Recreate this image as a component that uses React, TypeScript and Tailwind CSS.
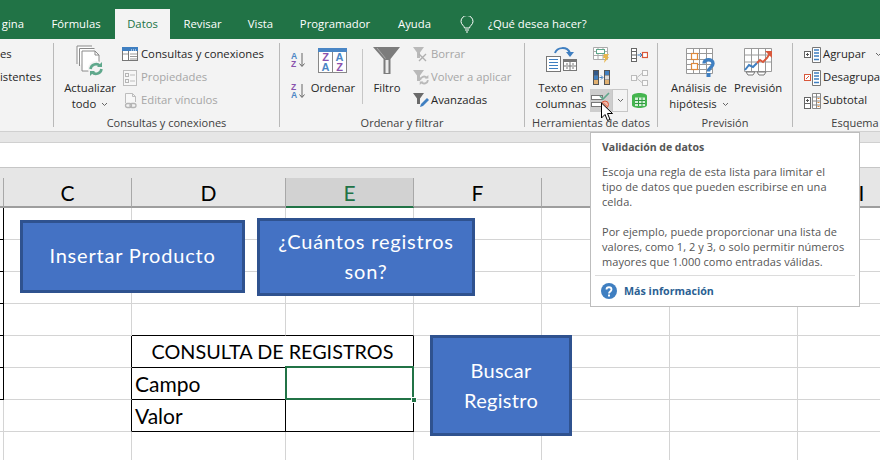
import type { ReactNode } from 'react';
import clsx from 'clsx';

const ui = 'font-["Open_Sans",sans-serif]';
const sheetFont = 'font-["Lato",sans-serif]';

const tabs = [
  { label: 'gina', w: 'w-[37px] text-right pr-[13px]' },
  { label: 'Fórmulas', w: 'w-[78px] text-center' },
  { label: 'Datos', w: 'w-[55px] text-center', active: true },
  { label: 'Revisar', w: 'w-[65px] text-center' },
  { label: 'Vista', w: 'w-[51px] text-center' },
  { label: 'Programador', w: 'w-[98px] text-center' },
  { label: 'Ayuda', w: 'w-[61px] text-center' },
];

function Chevron({ className = '' }: { className?: string }) {
  return (
    <svg width="7" height="5" viewBox="0 0 7 5" className={className}>
      <path d="M1 1l2.5 2.5L6 1" fill="none" stroke="#666" strokeWidth="1" />
    </svg>
  );
}

function Arrows({ x, y, s = 1, color = '#5fa88c' }: { x: number; y: number; s?: number; color?: string }) {
  return (
    <g transform={`translate(${x} ${y}) scale(${s})`} fill="none" stroke={color} strokeWidth="2.6">
      <path d="M1.5 7a5.5 5.5 0 0 1 9.5-3" />
      <path d="M12.5 7a5.5 5.5 0 0 1-9.5 3" />
      <path d="M8 5h5V0z" fill={color} stroke="none" />
      <path d="M6 9H1v5z" fill={color} stroke="none" />
    </g>
  );
}

function IconActualizar() {
  return (
    <svg width="36" height="34" viewBox="0 0 36 34">
      <path d="M5 20V2h15M7.5 22V4.500h15M10 24V7h13l4 4v16H10z" fill="#fff" stroke="#8a8a8a" strokeWidth="1" />
      <path d="M23 7v4h4" fill="none" stroke="#8a8a8a" />
      <circle cx="24" cy="25" r="8" fill="#f3f3f3" />
      <Arrows x={17} y={18} />
    </svg>
  );
}

function IconConsultas() {
  return (
    <svg width="17" height="15" viewBox="0 0 17 15">
      <rect x=".5" y=".5" width="15" height="13" fill="#fff" stroke="#777" />
      <rect x="0" y="0" width="16" height="4" fill="#3f7fc1" />
      <path d="M9 3h1M11 3h1M13 3h1" stroke="#fff" />
      <path d="M1 7h5M8 7h7M8 9.500h7M8 12h7" stroke="#999" />
      <path d="M6.500 4v10" stroke="#777" />
    </svg>
  );
}

function IconPropiedades() {
  return (
    <svg width="16" height="16" viewBox="0 0 16 16">
      <rect x="1.500" y=".5" width="13" height="15" fill="#f7f7f7" stroke="#bdbdbd" />
      <rect x="3.500" y="3.500" width="3" height="3" fill="none" stroke="#b5b5b5" />
      <rect x="3.500" y="9.500" width="3" height="3" fill="none" stroke="#b5b5b5" />
      <path d="M8 5h5M8 11h5" stroke="#bdbdbd" />
    </svg>
  );
}

function IconVinculos() {
  return (
    <svg width="16" height="16" viewBox="0 0 16 16">
      <path d="M3.500 10V.5h7l3 3V9M10.500.5v3h3" fill="#f7f7f7" stroke="#bdbdbd" />
      <rect x="3.500" y="10.500" width="6" height="4" rx="2" fill="none" stroke="#b5b5b5" strokeWidth="1.300" />
      <rect x="8" y="10.500" width="6" height="4" rx="2" fill="none" stroke="#b5b5b5" strokeWidth="1.300" />
    </svg>
  );
}

function IconSort({ first, second }: { first: string; second: string }) {
  const top = first === 'A' ? '#4a86c5' : '#8a52ad';
  const low = second === 'A' ? '#4a86c5' : '#8a52ad';
  return (
    <svg width="15" height="16" viewBox="0 0 15 16">
      <text x="0" y="7" fontSize="8.500" fontWeight="700" fontFamily="Liberation Sans" fill={top}>{first}</text>
      <text x="0" y="15" fontSize="8.500" fontWeight="700" fontFamily="Liberation Sans" fill={low}>{second}</text>
      <path d="M11 1v13M8.500 11.500L11 14.500l2.500-3" fill="none" stroke="#666" />
    </svg>
  );
}

function IconOrdenar() {
  return (
    <svg width="36" height="34" viewBox="0 0 36 34">
      <rect x="3.500" y="4.500" width="28" height="24" fill="#fff" stroke="#888" />
      <rect x="3" y="4" width="29" height="4" fill="#4a86c5" />
      <path d="M17.500 8v20" stroke="#888" />
      <g fontSize="11" fontWeight="700" fontFamily="Liberation Sans" textAnchor="middle">
        <text x="10.500" y="17" fill="#8a52ad">Z</text>
        <text x="10.500" y="27" fill="#4a86c5">A</text>
        <text x="24.500" y="17" fill="#4a86c5">A</text>
        <text x="24.500" y="27" fill="#8a52ad">Z</text>
      </g>
    </svg>
  );
}

function IconFiltro() {
  return (
    <svg width="36" height="34" viewBox="0 0 36 34">
      <path d="M4 3h27L21.500 15v15h-7V15z" fill="#7c7c7c" />
      <path d="M16.500 16h3v13h-3z" fill="#ececec" />
      <path d="M8 4l8.500 10.500" stroke="#a8a8a8" fill="none" />
    </svg>
  );
}

function SmallFunnel({ mark }: { mark: 'x' | 'redo' | 'pen' }) {
  const c = mark === 'pen' ? '#6a6a6a' : '#b9b9b9';
  return (
    <svg width="18" height="17" viewBox="0 0 18 17">
      <path d="M1 1h11L8 6.500V12H5V6.500z" fill={c} />
      {mark === 'x' && <path d="M7 8l7 7M14 8l-7 7" stroke="#b0b0b0" strokeWidth="1.400" />}
      {mark === 'redo' && <Arrows x={7} y={6} s={0.72} color="#b9b9b9" />}
      {mark === 'pen' && <path d="M8 15l1-3 6-6 2 2-6 6z" fill="#3f7fc1" />}
    </svg>
  );
}

function IconTexto() {
  return (
    <svg width="36" height="34" viewBox="0 0 36 34">
      <rect x="3.500" y="12.500" width="14" height="15" fill="#fff" stroke="#777" />
      <path d="M6 15.500h9M6 18.500h9M6 21.500h9M6 24.500h9" stroke="#3f7fc1" />
      <rect x="20.500" y="15.500" width="13" height="11" fill="#fff" stroke="#777" />
      <rect x="20" y="15" width="14" height="3" fill="#777" />
      <path d="M21 22h12M27 18v8M23 20h2M29 20h2M23 24h2M29 24h2" stroke="#777" />
      <path d="M12 9c2-6 12-7 15 0" fill="none" stroke="#3f7fc1" strokeWidth="2" />
      <path d="M23 8h8l-4 5z" fill="#3f7fc1" />
    </svg>
  );
}

function IconFlash() {
  return (
    <svg width="17" height="17" viewBox="0 0 17 17">
      <path d="M.5 1.500h14v12H.5zM.5 5.500h14M.5 9.500h14M5 1.500v12M10 1.500v12" fill="#fff" stroke="#aaa" />
      <rect x="3.500" y="3.500" width="8" height="4" fill="#fff" stroke="#5fa88c" />
      <path d="M11 8h5l-2 3h2l-5 6 1-5h-2z" fill="#e8b64c" />
    </svg>
  );
}

function IconDuplicados() {
  return (
    <svg width="17" height="15" viewBox="0 0 17 15">
      <rect x=".5" y=".5" width="5" height="14" fill="#666" stroke="#555" />
      <rect x="1" y="1" width="4" height="4" fill="#345a8a" />
      <rect x="1" y="5.500" width="4" height="4" fill="#3f7fc1" />
      <rect x="1" y="10" width="4" height="4" fill="#e0b070" />
      <rect x="11.500" y=".5" width="5" height="14" fill="#666" stroke="#555" />
      <rect x="12" y="1" width="4" height="4" fill="#3f7fc1" />
      <rect x="12" y="5.500" width="4" height="4" fill="#dcdcdc" />
      <rect x="12" y="10" width="4" height="4" fill="#e0b070" />
      <path d="M6.500 7.500h3M8 5.500l2 2-2 2" fill="none" stroke="#3f7fc1" />
    </svg>
  );
}

function IconValidacion() {
  return (
    <svg width="20" height="18" viewBox="0 0 20 18">
      <rect x=".5" y="3.500" width="11" height="4" fill="#fff" stroke="#777" />
      <rect x=".5" y="10.500" width="11" height="4" fill="#fff" stroke="#777" />
      <path d="M9 4l3 3 6-6" fill="none" stroke="#5fa88c" strokeWidth="1.600" />
      <circle cx="14" cy="12.500" r="3.500" fill="#f0b9a8" stroke="#d9583b" />
      <path d="M12 10.500l4 4" stroke="#d9583b" />
    </svg>
  );
}

function IconConsolidar() {
  return (
    <svg width="17" height="14" viewBox="0 0 17 14">
      <rect x=".5" y=".5" width="5" height="13" fill="#fff" stroke="#666" />
      <path d="M1 3.500h4M1 7h4M1 10.500h4" stroke="#666" />
      <path d="M6.500 7h4M9 5l2 2-2 2" fill="none" stroke="#3f7fc1" />
      <rect x="11.500" y="4.500" width="5" height="5" fill="#fff" stroke="#d9583b" strokeWidth="1.200" />
    </svg>
  );
}

function IconRelaciones() {
  return (
    <svg width="17" height="16" viewBox="0 0 17 16">
      <g fill="#fafafa" stroke="#bcbcbc">
        <rect x=".5" y="5.500" width="5" height="5" />
        <rect x="11.500" y=".5" width="5" height="5" />
        <rect x="11.500" y="10.500" width="5" height="5" />
      </g>
      <path d="M5.500 8l6-5M5.500 8l6 5" stroke="#bcbcbc" />
    </svg>
  );
}

function IconModelo() {
  return (
    <svg width="17" height="17" viewBox="0 0 17 17">
      <path d="M1 4c0-4 15-4 15 0v9c0 4-15 4-15 0z" fill="#45b54f" />
      <path d="M4 5.500h10V14H4z" fill="#d5f0d8" />
      <path d="M4 8.500h10M4 11.500h10M7.500 5.500V14M11 5.500V14" stroke="#2f9a3f" />
    </svg>
  );
}

function IconHipotesis() {
  return (
    <svg width="36" height="34" viewBox="0 0 36 34">
      <path d="M5.500 4.500h26v25h-26zM5.500 9.500h26M5.500 15.500h26M5.500 20.500h26M5.500 25.500h26M12.500 4.500v25M18.500 4.500v25M25.500 4.500v25" fill="#fff" stroke="#999" />
      <rect x="10.500" y="9.500" width="6" height="6" fill="#fff" stroke="#e08a3c" strokeWidth="1.200" />
      <rect x="10.500" y="19.500" width="6" height="6" fill="#fff" stroke="#e08a3c" strokeWidth="1.200" />
      <path d="M23 19.500c0-5 9-5 9 0 0 4-4.500 3.500-4.500 8" fill="none" stroke="#3f7fc1" strokeWidth="3.400" />
      <rect x="25.500" y="29" width="4" height="4" fill="#3f7fc1" />
    </svg>
  );
}

function IconPrevision() {
  return (
    <svg width="36" height="34" viewBox="0 0 36 34">
      <path d="M4.500 4.500h27v23h-27zM4.500 11h27M4.500 18h27M11.500 4.500v23M18.500 4.500v23M25.500 4.500v23" fill="#fff" stroke="#999" />
      <path d="M5 26l4-5 4 2 4-4" fill="none" stroke="#3f7fc1" strokeWidth="2" />
      <path d="M17 19l3-3 3 2 4-4 3-5" fill="none" stroke="#d9583b" strokeWidth="2" />
      <path d="M25 7h7v7z" fill="#d9583b" />
      <path d="M6 28h9l-2 3H8zM17 28h9l-2 3h-5z" fill="#fff" stroke="#777" />
    </svg>
  );
}

function IconEsquema({ kind }: { kind: 'agrupar' | 'desagrupar' | 'subtotal' }) {
  const box = kind === 'desagrupar' ? '#d9583b' : '#666';
  return (
    <svg width="17" height="16" viewBox="0 0 17 16">
      <rect x=".5" y="4.500" width="6" height="6" fill="#fff" stroke={box} />
      {kind === 'desagrupar' ? (
        <path d="M2 9l3-3" stroke={box} />
      ) : (
        <path d="M2 7.500h3M3.500 6v3" stroke="#555" />
      )}
      {kind === 'subtotal' ? (
        <>
          <rect x=".5" y="10.500" width="6" height="5" fill="#fff" stroke="#666" />
          <path d="M8.500.5h8v15h-8zM8.500 4h8M8.500 8h8M8.500 12h8M12.500.5v15" fill="#fff" stroke="#888" />
          <path d="M13.500 5.500h2M13.500 9.500h2M13.500 13.500h2" stroke="#e08a3c" />
        </>
      ) : (
        <>
          <path d="M8.500.5h8v15h-8z" fill="#fff" stroke="#777" />
          <path d="M10 3h5M10 6h5M10 9h5M10 12.500h5" stroke="#3f7fc1" strokeWidth="1.300" />
        </>
      )}
    </svg>
  );
}

function Small({ icon, label, disabled }: { icon: ReactNode; label: string; disabled?: boolean }) {
  return (
    <div className="flex h-[23px] items-center whitespace-nowrap">
      <div className="flex w-[19px] shrink-0 items-center">{icon}</div>
      <span className={clsx('pb-px', disabled ? 'text-[#a6a6a6]' : 'text-[#262626]')}>{label}</span>
    </div>
  );
}

function Big({ icon, lines, w, className, chevron }: { icon: ReactNode; lines: string[]; w: string; className?: string; chevron?: boolean }) {
  return (
    <div className={clsx('flex shrink-0 flex-col items-center whitespace-nowrap text-[#262626]', w, className)}>
      <div className="flex h-[37px] justify-center pt-px">{icon}</div>
      {lines.map((l, i) => (
        <div key={l} className="h-4 leading-4">
          {l}
          {chevron && i === lines.length - 1 && <Chevron className="ml-[5px] inline-block align-middle" />}
        </div>
      ))}
    </div>
  );
}

function Group({ label, w, children }: { label: string; w: string; children: ReactNode }) {
  return (
    <div className={clsx('flex h-[84px] shrink-0 flex-col border-r border-[#b9b9b9]', w)}>
      <div className="flex h-[72px]">{children}</div>
      <div className="h-3 text-center text-[11px] leading-4 whitespace-nowrap text-[#404040]">{label}</div>
    </div>
  );
}

function Ribbon() {
  return (
    <div className={clsx('flex h-[92px] overflow-hidden bg-[#f3f3f3] pt-1 text-[11.3px]', ui)}>
      <Group label="" w="w-[54px]">
        <div className="flex flex-col text-[#262626]">
          <div className="flex h-[23px] items-center pb-px">es</div>
          <div className="flex h-[23px] items-center pb-px">istentes</div>
        </div>
      </Group>

      <Group label="Consultas y conexiones" w="w-[226px]">
        <Big className="ml-1" w="w-[64px]" icon={<IconActualizar />} lines={['Actualizar', 'todo']} chevron />
        <div className="flex flex-col">
          <Small icon={<IconConsultas />} label="Consultas y conexiones" />
          <Small icon={<IconPropiedades />} label="Propiedades" disabled />
          <Small icon={<IconVinculos />} label="Editar vínculos" disabled />
        </div>
      </Group>

      <Group label="Ordenar y filtrar" w="w-[245px]">
        <div className="ml-[11px] flex w-[17px] flex-col gap-[15px] pt-[9px]">
          <IconSort first="A" second="Z" />
          <IconSort first="Z" second="A" />
        </div>
        <Big w="w-[50px]" icon={<IconOrdenar />} lines={['Ordenar']} />
        <div className="mt-[6px] ml-1 h-[55px] w-px bg-[#c6c6c6]" />
        <Big className="ml-1" w="w-[40px]" icon={<IconFiltro />} lines={['Filtro']} />
        <div className="ml-[5px] flex flex-col">
          <Small icon={<SmallFunnel mark="x" />} label="Borrar" disabled />
          <Small icon={<SmallFunnel mark="redo" />} label="Volver a aplicar" disabled />
          <Small icon={<SmallFunnel mark="pen" />} label="Avanzadas" />
        </div>
      </Group>

      <Group label="Herramientas de datos" w="w-[133px]">
        <Big className="ml-2" w="w-[56px]" icon={<IconTexto />} lines={['Texto en', 'columnas']} />
        <div className="ml-px flex w-[39px] flex-col">
          <div className="flex h-[23px] items-center pl-[3px]"><IconFlash /></div>
          <div className="flex h-[23px] items-center pl-[3px]"><IconDuplicados /></div>
          <div className="flex h-[23px]">
            <div className="flex w-[22px] items-center justify-center bg-[#cdcdcd]"><IconValidacion /></div>
            <div className="flex w-[16px] items-center justify-center border border-[#c6c6c6]"><Chevron /></div>
          </div>
        </div>
        <div className="ml-[2px] flex flex-col">
          <div className="flex h-[23px] items-center"><IconConsolidar /></div>
          <div className="flex h-[23px] items-center"><IconRelaciones /></div>
          <div className="flex h-[23px] items-center"><IconModelo /></div>
        </div>
      </Group>

      <Group label="Previsión" w="w-[135px]">
        <Big className="ml-3" w="w-[58px]" icon={<IconHipotesis />} lines={['Análisis de', 'hipótesis']} chevron />
        <Big className="ml-[2px]" w="w-[56px]" icon={<IconPrevision />} lines={['Previsión']} />
      </Group>

      <Group label="Esquema" w="w-[125px]">
        <div className="ml-[11px] flex flex-col">
          <div className="flex items-center">
            <Small icon={<IconEsquema kind="agrupar" />} label="Agrupar" />
            <Chevron className="ml-[9px]" />
          </div>
          <Small icon={<IconEsquema kind="desagrupar" />} label="Desagrupar" />
          <Small icon={<IconEsquema kind="subtotal" />} label="Subtotal" />
        </div>
      </Group>
    </div>
  );
}

function Cell({ r, b, className, children }: { r?: boolean; b?: boolean; className?: string; children?: ReactNode }) {
  return (
    <div className={clsx('flex items-center border-r border-b', r ? 'border-r-black' : 'border-r-[#d4d4d4]', b ? 'border-b-black' : 'border-b-[#d4d4d4]', className)}>
      {children}
    </div>
  );
}

function Head({ label, selected }: { label: string; selected?: boolean }) {
  return (
    <div className={clsx('flex items-center justify-center border-r border-b-2 border-r-[#a8a8a8] pt-[2px] text-[21px]', selected ? 'border-b-[#217346] bg-[#d2d2d2] text-[#217346]' : 'border-b-[#9e9e9e] bg-[#e6e6e6] text-black')}>
      {label}
    </div>
  );
}

function Sheet() {
  // G y H quedan tapadas por el tooltip
  const columns = ['C', 'D', 'E', 'F', '', ' ', 'I'];
  return (
    <div className={clsx('grid grid-cols-[4px_128px_154px_128px_128px_128px_128px_128px] grid-rows-[30px_repeat(8,32px)] text-[21px] text-black', sheetFont)}>
      <div className="border-r border-b-2 border-r-[#a8a8a8] border-b-[#9e9e9e] bg-[#e6e6e6]" />
      {columns.map((c) => (
        <Head key={c} label={c} selected={c === 'E'} />
      ))}
      {[0, 1, 2, 3, 4, 5, 6, 7].flatMap((row) => {
        const tick = row <= 5;
        const inTable = row >= 4 && row <= 6;
        const lead = [
          <Cell key={`b${row}`} r={tick} b={tick} />,
          <Cell key={`c${row}`} r={inTable} />,
        ];
        const tail = ['f', 'g', 'h', 'i'].map((c) => <Cell key={`${c}${row}`} />);
        if (row === 4) {
          return [
            ...lead,
            <Cell key="titulo" r b className="col-span-2 justify-center text-[19.8px]">CONSULTA DE REGISTROS</Cell>,
            ...tail,
          ];
        }
        return [
          ...lead,
          <Cell key={`d${row}`} r={inTable} b={row === 3 || inTable} className="pl-[3px]">
            {row === 5 && 'Campo'}
            {row === 6 && 'Valor'}
          </Cell>,
          <Cell key={`e${row}`} r={inTable} b={row === 3 || inTable} />,
          ...tail,
        ];
      })}
    </div>
  );
}

function Shape({ className, children }: { className: string; children: ReactNode }) {
  return (
    <div className={clsx('absolute flex items-center justify-center border-[3px] border-[#2f528f] bg-[#4472c4] text-center text-[20px] leading-[30px] text-white', sheetFont, className)}>
      {children}
    </div>
  );
}

export default function App() {
  return (
    <div className="relative h-[460px] w-[880px] overflow-hidden bg-white">
      <div className={clsx('flex h-[39px] items-end bg-[#217346] text-[11.3px] text-white', ui)}>
        {tabs.map((t) => (
          <div key={t.label} className={clsx('h-[30px] leading-[30px]', t.w, t.active && 'bg-[#f3f3f3] text-[#217346]')}>
            {t.label}
          </div>
        ))}
        <div className="flex h-[30px] items-center pl-[15px]">
          <svg width="14" height="17" viewBox="0 0 14 17">
            <path d="M4.500 12c0-2-3.500-3.500-3.500-6.500a6 6 0 0 1 12 0C13 8.500 9.500 10 9.500 12zM5 14h4M6 16h2" fill="none" stroke="#fff" />
          </svg>
          <span className="ml-[14px]">¿Qué desea hacer?</span>
        </div>
      </div>

      <Ribbon />

      <div className="h-3 border-y border-y-[#d0d0d0] bg-[#e6e6e6]" />
      <div className="h-[24px] bg-white" />
      <div className="h-[11px] border-t border-t-[#c6c6c6] bg-[#e6e6e6]" />

      <Sheet />

      <Shape className="top-[220px] left-[20px] h-[73px] w-[225px] pb-[3px] tracking-[0.8px]">Insertar Producto</Shape>
      <Shape className="top-[218px] left-[257px] h-[78px] w-[218px] pb-[2px] tracking-[0.8px]">¿Cuántos registros son?</Shape>
      <Shape className="top-[335px] left-[430px] h-[101px] w-[142px] pb-[2px] tracking-[0.3px]">
        <span>Buscar<br />Registro</span>
      </Shape>

      {/* celda activa */}
      <div className="absolute top-[366px] left-[285px] h-[34px] w-[129px] border-2 border-[#217346]" />
      <div className="absolute top-[397px] left-[411px] size-[6px] border border-white bg-[#217346]" />

      {/* tooltip */}
      <div className={clsx('absolute top-[132px] left-[590px] h-[175px] w-[270px] border border-[#bdbdbd] bg-white text-[11px] leading-[15px] text-[#555]', ui)}>
        <div className="pt-[7px] pl-[11px] text-[10.5px] font-bold">Validación de datos</div>
        <div className="mt-[9px] pl-[11px] tracking-[0.05px]">
          <p>Escoja una regla de esta lista para limitar el</p>
          <p>tipo de datos que pueden escribirse en una</p>
          <p>celda.</p>
          <p className="mt-[15px]">Por ejemplo, puede proporcionar una lista de</p>
          <p>valores, como 1, 2 y 3, o solo permitir números</p>
          <p>mayores que 1.000 como entradas válidas.</p>
        </div>
        <div className="mx-1 mt-[6px] h-px bg-[#dcdcdc]" />
        <div className="flex items-center pt-[7px] pl-[10px] text-[10.7px] font-bold text-[#2b5f93]">
          <svg width="16" height="16" viewBox="0 0 16 16">
            <circle cx="8" cy="8" r="8" fill="#3f7fc1" />
            <path d="M5.500 6.500c0-3 5-3 5 0 0 2-2.500 2-2.500 4" fill="none" stroke="#fff" strokeWidth="1.800" />
            <rect x="7" y="11.500" width="2" height="2" fill="#fff" />
          </svg>
          <span className="ml-[7px]">Más información</span>
        </div>
      </div>

      {/* puntero */}
      <svg className="absolute top-[102px] left-[600px]" width="15" height="21" viewBox="0 0 15 21">
        <path d="M1.500 1v15l3.500-3.500 2.500 6 2.500-1-2.500-6h5z" fill="#fff" stroke="#000" />
      </svg>
    </div>
  );
}
